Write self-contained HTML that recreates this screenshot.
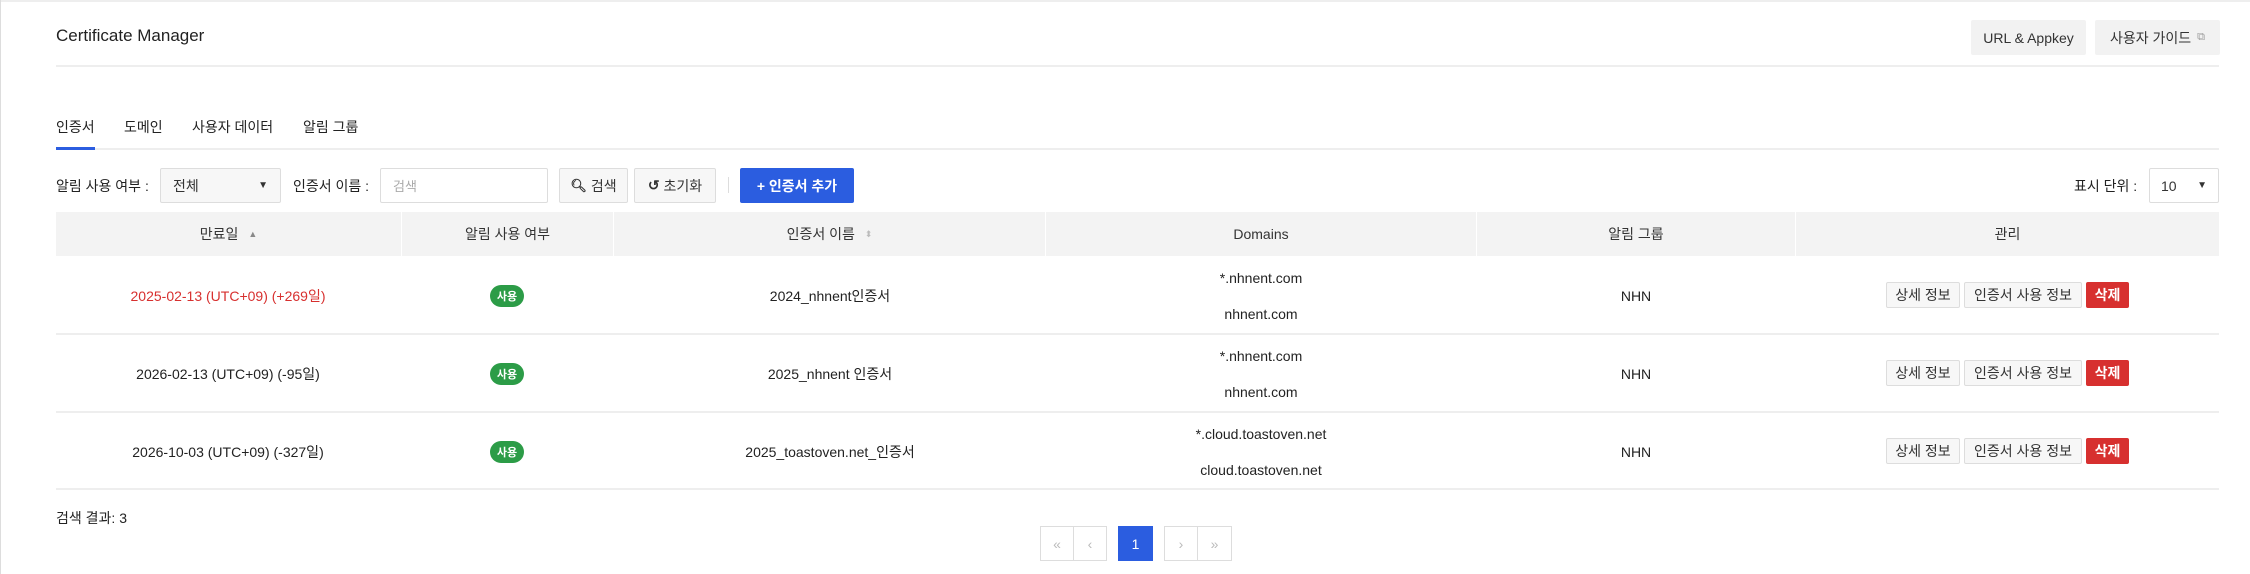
<!DOCTYPE html>
<html><head><meta charset="utf-8"><style>
*{box-sizing:border-box;margin:0;padding:0}
body{width:2250px;height:574px;background:#fff;font-family:"Liberation Sans","Noto Sans CJK KR",sans-serif;color:#222;font-size:14px;position:relative;overflow:hidden}
.a{position:absolute}
.btn{position:absolute;border:1px solid #ddd;background:#f7f7f7;border-radius:2px;display:flex;align-items:center;justify-content:center;font-size:14px;color:#333}
.hd{position:absolute;top:212px;height:44px;background:#f3f3f3;display:flex;align-items:center;justify-content:center;font-size:14px;color:#333}
.c{position:absolute;text-align:center;transform:translate(-50%,-50%);white-space:nowrap;font-size:14px}
.rl{position:absolute;left:56px;width:2163px;height:2px;background:#eee}
.badge{position:absolute;width:34px;height:22px;border-radius:11px;background:#2c9c47;color:#fff;font-size:11px;font-weight:bold;display:flex;align-items:center;justify-content:center}
.del{position:absolute;background:#d7302f;color:#fff;border-radius:2px;display:flex;align-items:center;justify-content:center;font-size:14px;font-weight:bold}
.pg{position:absolute;top:526px;height:35px;border:1px solid #ddd;display:flex;align-items:center;justify-content:center;color:#bbb;font-size:14px}
</style></head><body>
<div class="a" style="left:0;top:0;width:2250px;height:2px;background:#eee"></div>
<div class="a" style="left:0;top:0;width:1px;height:574px;background:#ddd"></div>
<div class="a" style="left:56px;top:26px;font-size:17px;color:#222">Certificate Manager</div>
<div class="btn" style="left:1971px;top:20px;width:115px;height:35px;border:none;background:#f2f2f2">URL &amp; Appkey</div>
<div class="btn" style="left:2095px;top:20px;width:125px;height:35px;border:none;background:#f2f2f2">사용자 가이드 <span style="color:#999;font-size:11px;margin-left:6px">⧉</span></div>
<div class="a" style="left:56px;top:65px;width:2163px;height:2px;background:#eee"></div>

<div class="a" style="left:56px;top:117px;font-size:14px">인증서</div>
<div class="a" style="left:124px;top:117px;font-size:14px">도메인</div>
<div class="a" style="left:192px;top:117px;font-size:14px">사용자 데이터</div>
<div class="a" style="left:303px;top:117px;font-size:14px">알림 그룹</div>
<div class="a" style="left:56px;top:148px;width:2163px;height:2px;background:#eee"></div>
<div class="a" style="left:56px;top:147px;width:39px;height:3px;background:#2b5de0"></div>

<div class="a" style="left:56px;top:176px">알림 사용 여부 :</div>
<div class="btn" style="left:160px;top:168px;width:121px;height:35px;background:#f7f7f7;justify-content:space-between;padding:0 12px"><span>전체</span><span style="font-size:10px">▼</span></div>
<div class="a" style="left:293px;top:176px">인증서 이름 :</div>
<div class="btn" style="left:380px;top:168px;width:168px;height:35px;background:#fff;justify-content:flex-start;padding-left:12px;color:#aaa;font-size:13px">검색</div>
<div class="btn" style="left:559px;top:168px;width:69px;height:35px"><b style="margin-right:4px;font-size:13px">&#x1F50D;&#xFE0E;</b>검색</div>
<div class="btn" style="left:634px;top:168px;width:82px;height:35px"><b style="margin-right:4px">↺</b>초기화</div>
<div class="a" style="left:728px;top:177px;width:1px;height:16px;background:#ddd"></div>
<div class="btn" style="left:740px;top:168px;width:114px;height:35px;background:#2b5de0;border:none;color:#fff;font-weight:bold">+ 인증서 추가</div>
<div class="a" style="left:2074px;top:176px">표시 단위 :</div>
<div class="btn" style="left:2149px;top:168px;width:70px;height:35px;background:#fff;justify-content:space-between;padding:0 11px"><span>10</span><span style="font-size:10px">▼</span></div>

<div class="hd" style="left:56px;width:345px">만료일 <span style="font-size:9px;color:#888;margin-left:10px">▲</span></div>
<div class="hd" style="left:402px;width:211px">알림 사용 여부</div>
<div class="hd" style="left:614px;width:431px">인증서 이름 <span style="font-size:9px;color:#bbb;margin-left:10px">⬍</span></div>
<div class="hd" style="left:1046px;width:430px">Domains</div>
<div class="hd" style="left:1477px;width:318px">알림 그룹</div>
<div class="hd" style="left:1796px;width:423px">관리</div>

<div class="rl" style="top:333px"></div>
<div class="rl" style="top:411px"></div>
<div class="rl" style="top:488px"></div>

<div class="c" style="left:228px;top:296px;color:#d7302f">2025-02-13 (UTC+09) (+269일)</div>
<div class="c" style="left:228px;top:374px">2026-02-13 (UTC+09) (-95일)</div>
<div class="c" style="left:228px;top:452px">2026-10-03 (UTC+09) (-327일)</div>
<div class="badge" style="left:490px;top:285px">사용</div>
<div class="badge" style="left:490px;top:363px">사용</div>
<div class="badge" style="left:490px;top:441px">사용</div>
<div class="c" style="left:830px;top:296px">2024_nhnent인증서</div>
<div class="c" style="left:830px;top:374px">2025_nhnent 인증서</div>
<div class="c" style="left:830px;top:452px">2025_toastoven.net_인증서</div>
<div class="c" style="left:1261px;top:278px">*.nhnent.com</div>
<div class="c" style="left:1261px;top:314px">nhnent.com</div>
<div class="c" style="left:1261px;top:356px">*.nhnent.com</div>
<div class="c" style="left:1261px;top:392px">nhnent.com</div>
<div class="c" style="left:1261px;top:434px">*.cloud.toastoven.net</div>
<div class="c" style="left:1261px;top:470px">cloud.toastoven.net</div>
<div class="c" style="left:1636px;top:296px">NHN</div>
<div class="c" style="left:1636px;top:374px">NHN</div>
<div class="c" style="left:1636px;top:452px">NHN</div>

<div class="btn" style="left:1886px;top:282px;width:74px;height:26px">상세 정보</div>
<div class="btn" style="left:1964px;top:282px;width:118px;height:26px">인증서 사용 정보</div>
<div class="del" style="left:2086px;top:282px;width:43px;height:26px">삭제</div>
<div class="btn" style="left:1886px;top:360px;width:74px;height:26px">상세 정보</div>
<div class="btn" style="left:1964px;top:360px;width:118px;height:26px">인증서 사용 정보</div>
<div class="del" style="left:2086px;top:360px;width:43px;height:26px">삭제</div>
<div class="btn" style="left:1886px;top:438px;width:74px;height:26px">상세 정보</div>
<div class="btn" style="left:1964px;top:438px;width:118px;height:26px">인증서 사용 정보</div>
<div class="del" style="left:2086px;top:438px;width:43px;height:26px">삭제</div>

<div class="a" style="left:56px;top:508px">검색 결과: 3</div>
<div class="pg" style="left:1040px;width:34px">«</div>
<div class="pg" style="left:1073px;width:34px">‹</div>
<div class="pg" style="left:1118px;width:35px;background:#2b5de0;border-color:#2b5de0;color:#fff">1</div>
<div class="pg" style="left:1164px;width:34px">›</div>
<div class="pg" style="left:1197px;width:35px">»</div>
</body></html>
